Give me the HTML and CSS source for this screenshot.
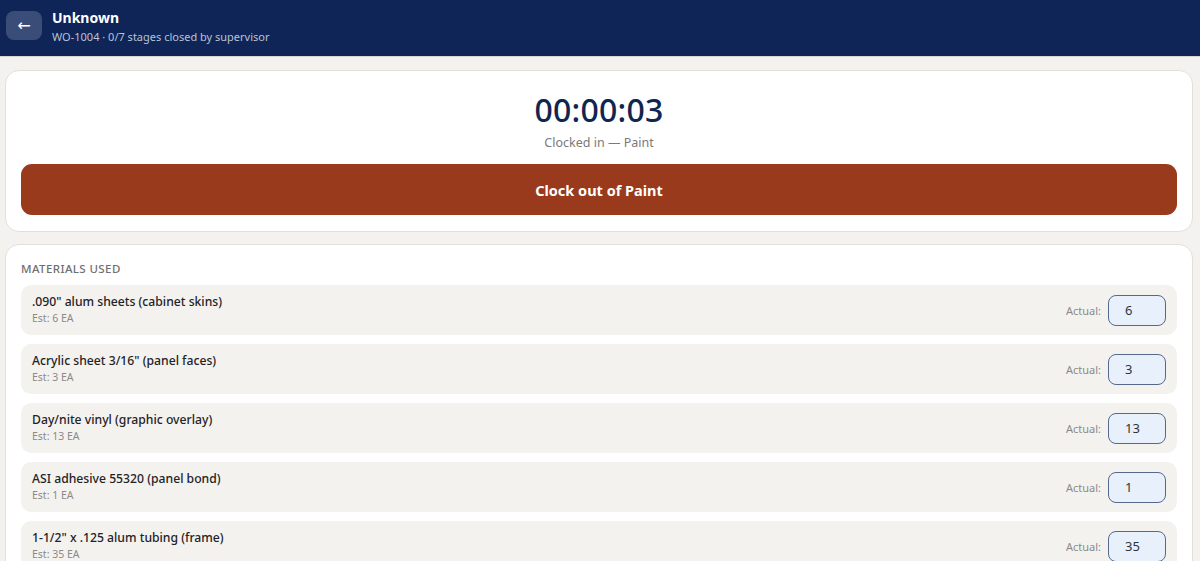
FILE: index.html
```html
<!DOCTYPE html>
<html>
<head>
<meta charset="utf-8">
<link rel="stylesheet" href="styles.css">
</head>
<body>
<header class="topbar">
  <button class="back">&larr;</button>
  <div class="titles">
    <div class="title">Unknown</div>
    <div class="subtitle">WO-1004 · 0/7 stages closed by supervisor</div>
  </div>
</header>
<main class="page">
  <section class="card clock">
    <div class="timer">00:00:03</div>
    <div class="status">Clocked in — Paint</div>
    <button class="clockout">Clock out of Paint</button>
  </section>
  <section class="card materials">
    <div class="section-title">MATERIALS USED</div>
    <div class="rows">
      <div class="row">
        <div class="info"><div class="name">.090" alum sheets (cabinet skins)</div><div class="est">Est: 6 EA</div></div>
        <div class="actual"><span class="label">Actual:</span><div class="input">6</div></div>
      </div>
      <div class="row">
        <div class="info"><div class="name">Acrylic sheet 3/16" (panel faces)</div><div class="est">Est: 3 EA</div></div>
        <div class="actual"><span class="label">Actual:</span><div class="input">3</div></div>
      </div>
      <div class="row">
        <div class="info"><div class="name">Day/nite vinyl (graphic overlay)</div><div class="est">Est: 13 EA</div></div>
        <div class="actual"><span class="label">Actual:</span><div class="input">13</div></div>
      </div>
      <div class="row">
        <div class="info"><div class="name">ASI adhesive 55320 (panel bond)</div><div class="est">Est: 1 EA</div></div>
        <div class="actual"><span class="label">Actual:</span><div class="input">1</div></div>
      </div>
      <div class="row">
        <div class="info"><div class="name">1-1/2" x .125 alum tubing (frame)</div><div class="est">Est: 35 EA</div></div>
        <div class="actual"><span class="label">Actual:</span><div class="input">35</div></div>
      </div>
    </div>
  </section>
</main>
</body>
</html>
```
FILE: styles.css
```css
* { box-sizing: border-box; }
html, body { margin: 0; padding: 0; }
body {
  font-family: "Noto Sans", "Open Sans", sans-serif;
  background: #f4f2ee;
  color: #1f2328;
  height: 561px;
  overflow: hidden;
}
.topbar {
  height: 57px;
  background: #0f2557;
  display: flex;
  align-items: center;
  gap: 10px;
  padding: 0 6px;
  border-bottom: 1px solid #d9d6cf;
}
.back {
  width: 36px;
  height: 29px;
  border: none;
  border-radius: 8px;
  background: #3a4c78;
  color: #fff;
  font-size: 16px;
  font-family: "DejaVu Sans", sans-serif;
  padding: 0;
  display: flex;
  align-items: center;
  justify-content: center;
  margin-top: -5px;
}
.titles { display: flex; flex-direction: column; gap: 2px; margin-top: -3px; }
.title { color: #fff; font-weight: 700; font-size: 14px; line-height: 19px; }
.subtitle { color: #b9c2d6; font-size: 11px; line-height: 16px; }
.page {
  padding: 13px 7px 0 5px;
  display: flex;
  flex-direction: column;
  gap: 12px;
}
.card {
  background: #fff;
  border: 1px solid #e3e0da;
  border-radius: 14px;
}
.clock {
  padding: 19px 15px 16px;
  display: flex;
  flex-direction: column;
  align-items: center;
}
.timer {
  font-size: 32px;
  line-height: 40px;
  color: #11254f;
  font-weight: 500;
  letter-spacing: 0.2px;
}
.status {
  font-size: 12.5px;
  color: #7a7a7a;
  line-height: 18px;
  margin-top: 4px;
}
.clockout {
  margin-top: 12px;
  width: 100%;
  height: 51px;
  border: none;
  border-radius: 11px;
  background: #9a3a1c;
  color: #fff;
  font-family: inherit;
  font-size: 14.5px;
  font-weight: 700;
}
.materials {
  padding: 16px 15px 20px;
}
.section-title {
  font-size: 11.5px;
  font-weight: 500;
  color: #6f6f6f;
  letter-spacing: 0.4px;
  line-height: 16px;
  margin-bottom: 8px;
}
.rows { display: flex; flex-direction: column; gap: 9px; }
.row {
  height: 50px;
  background: #f4f2ee;
  border-radius: 10px;
  display: flex;
  align-items: center;
  justify-content: space-between;
  padding: 0 11px;
}
.info { display: flex; flex-direction: column; margin-top: -2px; }
.name { font-size: 12.2px; font-weight: 500; line-height: 18px; color: #1f2328; }
.est { font-size: 10.5px; line-height: 15px; color: #8a8a8a; }
.actual { display: flex; align-items: center; gap: 7px; }
.label { font-size: 11px; color: #8a8a8a; }
.input {
  width: 58px;
  height: 31px;
  border: 1.5px solid #56698c;
  border-radius: 8px;
  background: #e8f0fb;
  font-size: 13px;
  color: #2b3440;
  display: flex;
  align-items: center;
  padding-left: 16px;
}
```
